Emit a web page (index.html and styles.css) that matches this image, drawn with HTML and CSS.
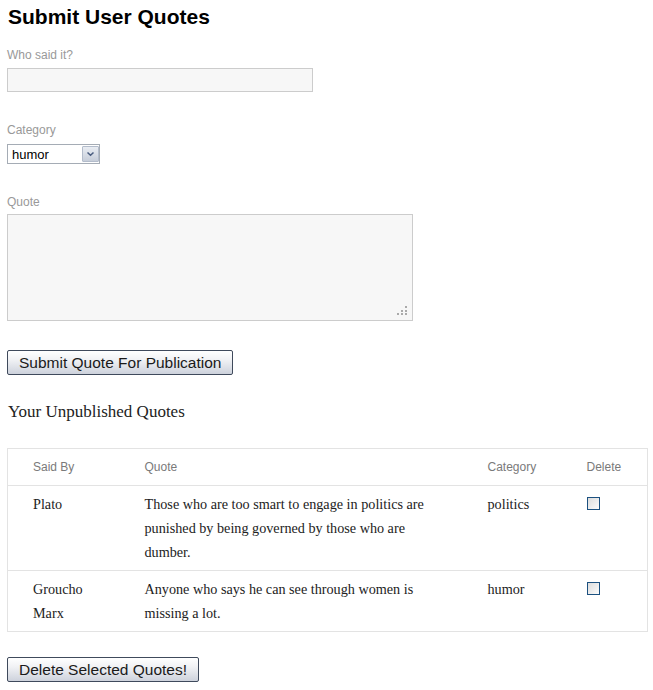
FILE: index.html
```html
<!DOCTYPE html>
<html>
<head>
<meta charset="utf-8">
<title>Submit User Quotes</title>
<link rel="stylesheet" href="styles.css">
</head>
<body>
<div class="page">
  <h1 class="title">Submit User Quotes</h1>
  <form class="quote-form">
    <label class="field-label">Who said it?</label>
    <input class="text-input" type="text">
    <label class="field-label gap">Category</label>
    <div class="select-wrap">
      <select class="select">
        <option>humor</option>
        <option>politics</option>
      </select>
      <span class="select-arrow"><svg width="9" height="6" viewBox="0 0 9 6"><path d="M1.5 1.5 L4.5 4.3 L7.5 1.5" fill="none" stroke="#4a5d80" stroke-width="1.5"/></svg></span>
    </div>
    <label class="field-label gap">Quote</label>
    <div class="textarea-wrap">
      <textarea class="textarea"></textarea>
      <svg class="grip" width="11" height="10" viewBox="0 0 11 10">
        <rect x="8" y="0" width="2" height="2" fill="#aaa"/>
        <rect x="4" y="4" width="2" height="2" fill="#aaa"/>
        <rect x="8" y="4" width="2" height="2" fill="#aaa"/>
        <rect x="0" y="7" width="2" height="2" fill="#aaa"/>
        <rect x="4" y="7" width="2" height="2" fill="#aaa"/>
        <rect x="8" y="7" width="2" height="2" fill="#aaa"/>
      </svg>
    </div>
    <div class="submit-row"><button type="button" class="btn">Submit Quote For Publication</button></div>
  </form>
  <h2 class="subtitle">Your Unpublished Quotes</h2>
  <table class="quotes">
    <colgroup>
      <col class="c1"><col class="c2"><col class="c3"><col class="c4">
    </colgroup>
    <thead>
      <tr><th>Said By</th><th>Quote</th><th>Category</th><th>Delete</th></tr>
    </thead>
    <tbody>
      <tr>
        <td>Plato</td>
        <td>Those who are too smart to engage in politics are punished by being governed by those who are dumber.</td>
        <td>politics</td>
        <td><span class="check"></span></td>
      </tr>
      <tr>
        <td>Groucho Marx</td>
        <td>Anyone who says he can see through women is missing a lot.</td>
        <td>humor</td>
        <td><span class="check"></span></td>
      </tr>
    </tbody>
  </table>
  <div class="delete-row"><button type="button" class="btn">Delete Selected Quotes!</button></div>
</div>
</body>
</html>
```
FILE: styles.css
```css
html, body {
  margin: 0;
  padding: 0;
  background: #fff;
}
.page {
  padding: 5px 6px 0 7px;
  font-family: "Liberation Sans", Arial, sans-serif;
}
.title {
  margin: 0 0 0 1px;
  font-size: 21px;
  line-height: 24px;
  font-weight: bold;
  color: #000;
}
.quote-form {
  display: flex;
  flex-direction: column;
  align-items: flex-start;
  margin-top: 18px;
}
.field-label {
  font-size: 12px;
  line-height: 16px;
  color: #999;
}
.field-label.gap {
  margin-top: 30px;
}
.text-input {
  box-sizing: border-box;
  margin: 5px 0 0;
  width: 306px;
  height: 24px;
  border: 1px solid #ccc;
  background: #f7f7f7;
  padding: 2px 4px;
  font-size: 13px;
  outline: none;
}
.select-wrap {
  position: relative;
  margin-top: 6px;
  width: 93px;
  height: 20px;
}
.select {
  appearance: none;
  -webkit-appearance: none;
  box-sizing: border-box;
  width: 93px;
  height: 20px;
  margin: 0;
  border: 1px solid #a5acb5;
  border-radius: 0;
  background: #fff;
  padding: 0 0 0 4px;
  font-family: "Liberation Sans", Arial, sans-serif;
  font-size: 13px;
  color: #000;
  outline: none;
}
.select-arrow {
  position: absolute;
  top: 2px;
  right: 1px;
  width: 17px;
  height: 16px;
  box-sizing: border-box;
  border: 1px solid #b3bccb;
  border-radius: 1px;
  background: linear-gradient(#e9edf3, #c6cdd9);
  display: flex;
  align-items: center;
  justify-content: center;
  pointer-events: none;
}
.textarea-wrap {
  position: relative;
  margin-top: 4px;
  width: 406px;
  height: 107px;
}
.textarea {
  box-sizing: border-box;
  display: block;
  margin: 0;
  width: 406px;
  height: 107px;
  border: 1px solid #ccc;
  background: #f7f7f7;
  resize: none;
  outline: none;
}
.grip {
  position: absolute;
  right: 5px;
  bottom: 5px;
}
.submit-row {
  margin-top: 29px;
}
.btn {
  box-sizing: border-box;
  height: 25px;
  padding: 0 11px;
  border: 1px solid #3f4a5c;
  border-radius: 2px;
  background: linear-gradient(#ffffff 0%, #f0f1f4 40%, #cdd2dc 100%);
  font-family: "Liberation Sans", Arial, sans-serif;
  font-size: 15.5px;
  color: #1a1a1a;
  line-height: 21px;
  cursor: pointer;
}
.subtitle {
  margin: 27px 0 0 1px;
  font-family: "Liberation Serif", Georgia, serif;
  font-weight: normal;
  font-size: 17px;
  line-height: 20px;
  color: #222;
}
.quotes {
  margin-top: 26px;
  width: 640px;
  border-collapse: collapse;
  border: 1px solid #e3e3e3;
  table-layout: fixed;
}
.c1 { width: 112px; }
.c2 { width: 343px; }
.c3 { width: 99px; }
.c4 { width: 86px; }
.quotes th {
  text-align: left;
  font-family: "Liberation Sans", Arial, sans-serif;
  font-weight: normal;
  font-size: 12px;
  line-height: 16px;
  color: #7a7a7a;
  padding: 10px 25px 10px 25px;
  border-bottom: 1px solid #e3e3e3;
}
.quotes td {
  vertical-align: top;
  font-family: "Liberation Serif", Cambria, serif;
  font-size: 14.2px;
  line-height: 24px;
  color: #222;
  padding: 6px 25px 6px 25px;
  border-bottom: 1px solid #e3e3e3;
}
.check {
  box-sizing: border-box;
  width: 13px;
  height: 13px;
  margin-top: 5px;
  border: 1px solid #1c5180;
  background: linear-gradient(135deg, #dcdcdc, #fbfbfb);
  display: block;
}
.delete-row {
  margin-top: 25px;
}
```
